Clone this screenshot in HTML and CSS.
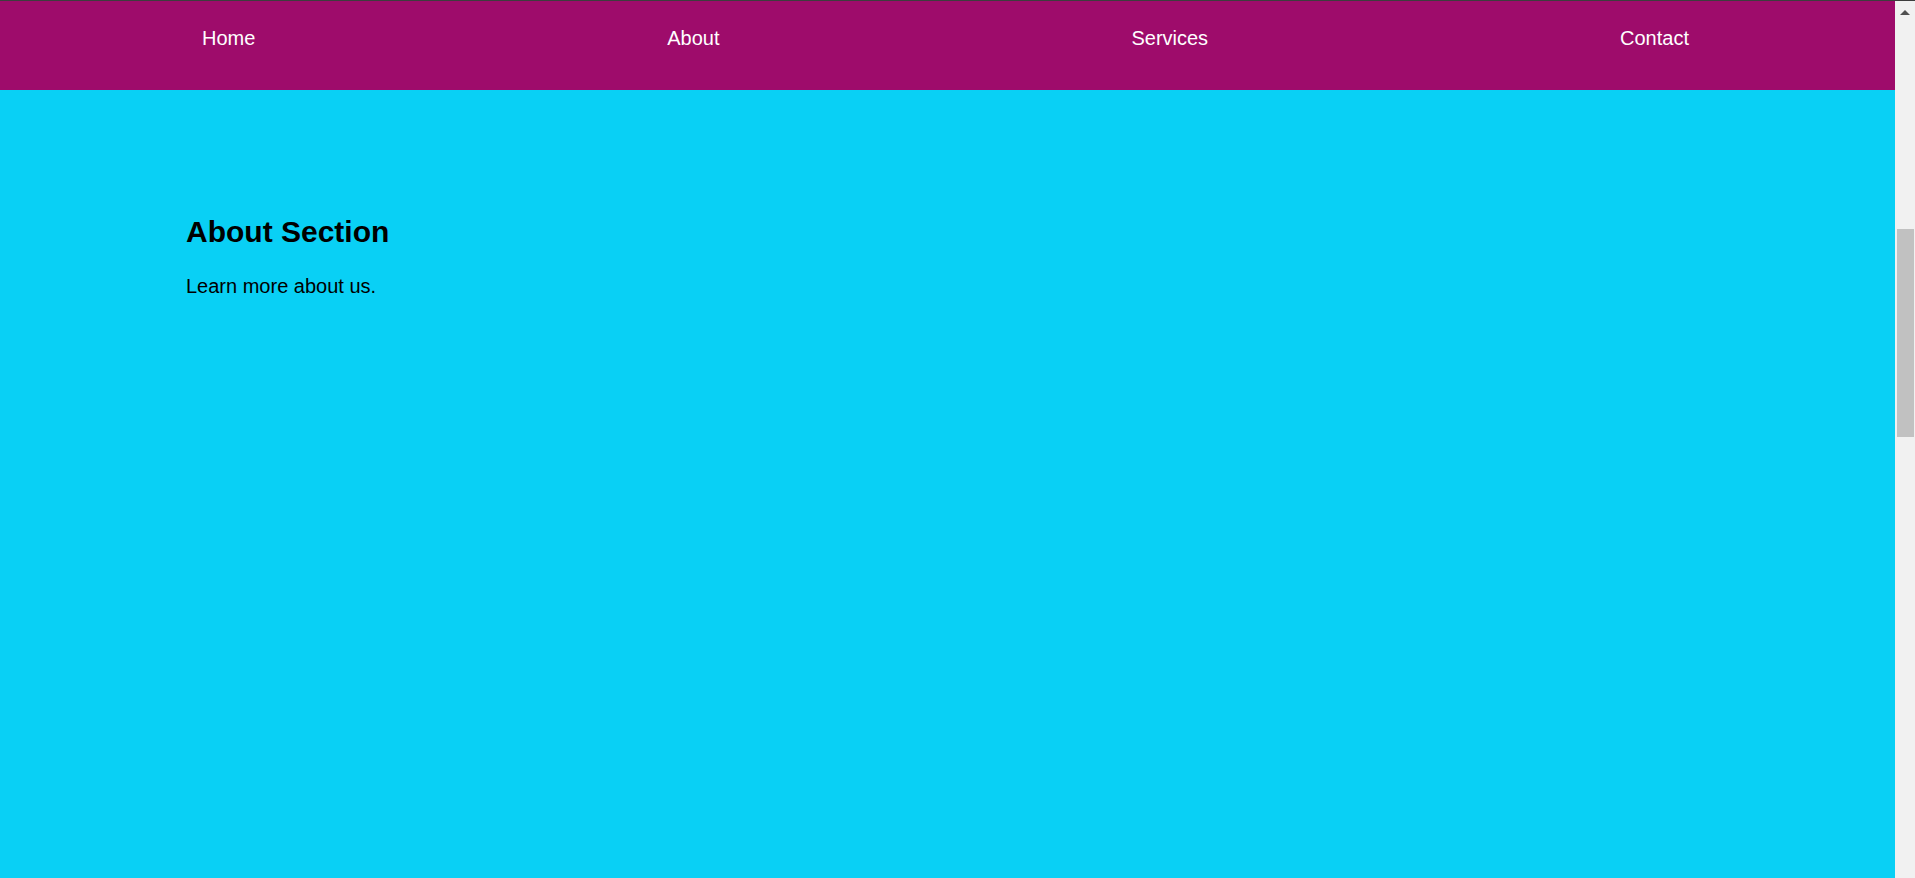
FILE: index.html
```html
<!DOCTYPE html>
<html lang="en">
<head>
<meta charset="utf-8">
<title>About</title>
<link rel="stylesheet" href="styles.css">
</head>
<body>
<div class="frame">
  <div class="page">
    <nav class="nav">
      <ul class="nav-list">
        <li><a class="nav-link" href="#home">Home</a></li>
        <li><a class="nav-link" href="#about">About</a></li>
        <li><a class="nav-link" href="#services">Services</a></li>
        <li><a class="nav-link" href="#contact">Contact</a></li>
      </ul>
    </nav>
    <section class="section" id="about">
      <h1 class="section-title">About Section</h1>
      <p class="section-text">Learn more about us.</p>
    </section>
  </div>
  <div class="scrollbar">
    <div class="scroll-arrow"></div>
    <div class="scroll-thumb"></div>
  </div>
</div>
</body>
</html>
```

FILE: styles.css
```css
html, body {
  margin: 0;
  padding: 0;
  height: 100%;
  overflow: hidden;
}

body {
  font-family: "Liberation Sans", Arial, sans-serif;
  background: #f1f1f1;
}

.frame {
  display: flex;
  height: 100%;
  border-top: 1px solid #3d3d3d;
  box-sizing: border-box;
}

.page {
  flex: 1;
  display: flex;
  flex-direction: column;
  background: #09d0f5;
  min-width: 0;
}

.nav {
  background: #9e0c6b;
  height: 89px;
  box-sizing: border-box;
  padding-top: 26px;
}

.nav-list {
  list-style: none;
  margin: 0 0 0 -4px;
  padding: 0;
  display: flex;
  justify-content: space-around;
}

.nav-link {
  color: #ffffff;
  text-decoration: none;
  font-size: 20px;
  line-height: 23px;
}

.section {
  flex: 1;
  padding: 124px 0 0 186px;
}

.section-title {
  margin: 0 0 26px;
  font-size: 30px;
  line-height: 35px;
  font-weight: bold;
  color: #000;
}

.section-text {
  margin: 0;
  font-size: 20px;
  line-height: 23px;
  color: #000;
}

.scrollbar {
  width: 20px;
  flex: none;
  background: #f1f1f1;
  display: flex;
  flex-direction: column;
  align-items: flex-end;
}

.scroll-arrow {
  width: 0;
  height: 0;
  border-left: 5px solid transparent;
  border-right: 5px solid transparent;
  border-bottom: 5px solid #505050;
  margin: 9px 5px 0 0;
}

.scroll-thumb {
  width: 17px;
  height: 208px;
  background: #c1c1c1;
  margin-top: 214px;
  margin-right: 1px;
}
```
